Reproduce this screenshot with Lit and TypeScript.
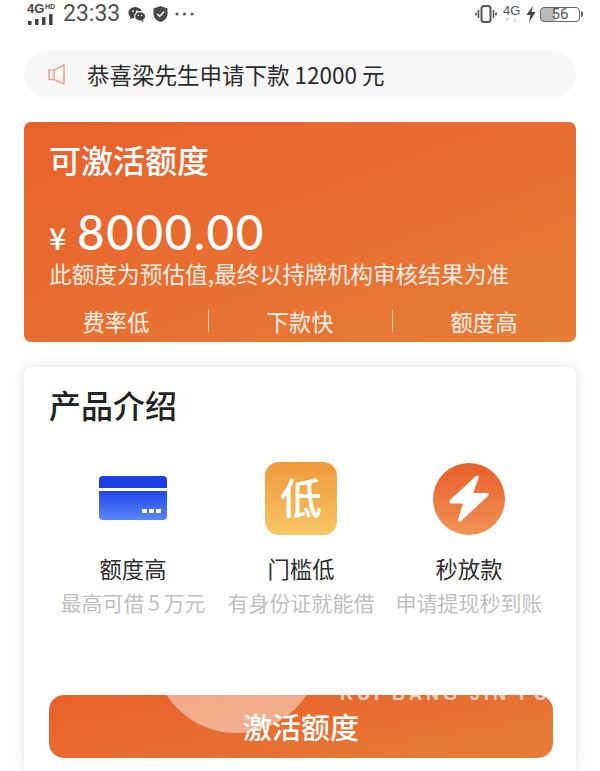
import { LitElement, html, css } from "lit";
import { customElement } from "lit/decorators.js";

@customElement("app-root")
export class AppRoot extends LitElement {
  static styles = css`
    :host { display: block; width: 600px; height: 771px; overflow: hidden; background: #fff; font-family: "Noto Sans CJK SC", "Noto Sans", sans-serif; color: #222; }
    .page { height: 771px; display: flex; flex-direction: column; overflow: hidden; }
    .status { box-sizing: border-box; height: 27px; padding: 1px 20px 0 27px; display: flex; align-items: center; color: #4a4a4a; flex: none; }
    .sig { display: block; }
    .time { font: 23px/28px "Roboto", sans-serif; margin-left: 8px; color: #505050; }
    .ic { display: block; }
    .wechat { margin-left: 8px; }
    .shield { margin-left: 7px; }
    .dots { margin-left: 7px; }
    .spacer { flex: 1; }
    .g4 { margin: 0 6px 0 6px; }
    .bat { margin-left: 4px; width: 40px; height: 15px; border: 1.5px solid #666; border-radius: 4px; box-sizing: border-box; position: relative; background: linear-gradient(90deg, #bbb 0 36%, #fff 36%); display: flex; align-items: center; justify-content: center; font: 15px/14px "Roboto", sans-serif; color: #555; }
    .bat::after { content: ""; position: absolute; right: -4px; top: 3px; width: 2px; height: 6px; background: #666; border-radius: 0 2px 2px 0; }
    .notice { margin: 24px 24px 0; height: 46px; border-radius: 23px; background: #f7f7f7; display: flex; align-items: center; padding-left: 24px; gap: 22px; font-size: 22.5px; color: #2a2a2a; flex: none; }
    .card { margin: 25px 24px 0; height: 220px; box-sizing: border-box; border-radius: 7px; padding: 15px 0 0 25px; color: #fff; background: linear-gradient(160deg, #e9602b, #e67d38); display: flex; flex-direction: column; flex: none; }
    .card h1 { margin: 0; font-size: 32px; line-height: 44px; font-weight: 500; }
    .amount { display: flex; align-items: baseline; margin-top: 22px; height: 46px; line-height: 46px; }
    .yen { font: 500 30px "Noto Sans CJK SC", sans-serif; margin-right: 11px; }
    .num { font: 500 47.5px "Lato", sans-serif; letter-spacing: 1.6px; }
    .note { font-size: 22.7px; line-height: 30px; margin-top: 10px; white-space: nowrap; color: #fdeee5; }
    .tags { margin: 20px 0 0 -25px; display: grid; grid-template-columns: 184px 184px 184px; align-items: center; }
    .tag { text-align: center; font-size: 22.3px; line-height: 24px; position: relative; color: #fff2ea; }
    .tag + .tag::before { content: ""; position: absolute; left: 0; top: 1px; width: 1px; height: 22px; background: #f6cdb4; }
    .panel { margin: 25px 24px 0; flex: 1; border-radius: 8px 8px 0 0; background: #fff; box-shadow: 0 0 12px rgba(0,0,0,0.13); padding: 15px 23px 0 25px; display: flex; flex-direction: column; }
    .panel h2 { margin: 0; font-size: 32px; line-height: 44px; font-weight: 500; color: #222; }
    .feats { margin-top: 36px; display: grid; grid-template-columns: repeat(3, 1fr); text-align: center; }
    .feat { display: flex; flex-direction: column; align-items: center; }
    .feat .box { height: 73px; display: flex; align-items: center; justify-content: center; }
    .low { width: 72px; height: 73px; border-radius: 14px; background: linear-gradient(180deg, #f0983a, #f6c664); color: #fff; font-size: 42px; line-height: 68px; text-align: center; font-weight: 500; }
    .name { font-size: 22.3px; line-height: 30px; margin-top: 18px; color: #2c2c2c; white-space: nowrap; }
    .desc { font-size: 21px; line-height: 28px; margin-top: 5px; color: #bfbfbf; white-space: nowrap; word-spacing: -1px; }
    .cta { box-sizing: border-box; margin-top: 79px; height: 63px; padding-bottom: 2px; border-radius: 15px; position: relative; overflow: hidden; background: linear-gradient(170deg, #e85f2a, #e67d38); display: flex; align-items: center; justify-content: center; color: #fff; font-size: 29px; font-weight: 500; }
    .cta span { position: relative; }
    .bubble { position: absolute; left: 104px; top: -129px; width: 167px; height: 167px; border-radius: 50%; background: rgba(255,255,255,0.45); }
    .mark { position: absolute; left: 291px; top: -11px; font: 700 18px/20px "Liberation Sans", sans-serif; letter-spacing: 4px; color: rgba(255,255,255,0.7); white-space: nowrap; }
  `;

  render() {
    return html`<div class="page">
      <div class="status">
        <svg class="sig" width="28" height="24" viewBox="0 0 28 24">
          <text x="0" y="11" font-family="Liberation Sans" font-size="13" font-weight="700" fill="#444">4G</text>
          <text x="18" y="7" font-family="Liberation Sans" font-size="7" font-weight="700" fill="#444">HD</text>
          <rect x="1" y="19" width="3.500" height="4" fill="#444"/><rect x="8" y="17" width="3.500" height="6" fill="#444"/><rect x="15" y="15" width="3.500" height="8" fill="#444"/><rect x="22" y="12" width="3.500" height="11" fill="#444"/>
        </svg>
        <span class="time">23:33</span>
        <svg class="ic wechat" width="18" height="17" viewBox="0 0 20 18">
          <ellipse cx="8" cy="7" rx="7.600" ry="6.400" fill="#444"/><path d="M3 11 L2.400 14.600 L6.500 12 Z" fill="#444"/>
          <ellipse cx="13.500" cy="11" rx="6.200" ry="5.200" fill="#444" stroke="#fff" stroke-width="1.200"/><path d="M16.500 15 L17.400 17.400 L14 16 Z" fill="#444"/>
          <circle cx="5.600" cy="5.400" r="1" fill="#fff"/><circle cx="10" cy="5.400" r="1" fill="#fff"/><circle cx="11.600" cy="10" r=".8" fill="#fff"/><circle cx="15.200" cy="10" r=".8" fill="#fff"/>
        </svg>
        <svg class="ic shield" width="15" height="18" viewBox="0 0 16 18">
          <path d="M8 .5 L15.500 3 V9 C15.500 13.500 11.500 16.500 8 17.500 C4.500 16.500 .5 13.500 .5 9 V3 Z" fill="#484848"/>
          <path d="M4.500 8.800 L7.200 11.400 L11.800 6.400" fill="none" stroke="#e4e4e4" stroke-width="1.800"/>
        </svg>
        <svg class="ic dots" width="19" height="4" viewBox="0 0 19 4"><circle cx="2" cy="2" r="1.500" fill="#555"/><circle cx="9.500" cy="2" r="1.500" fill="#555"/><circle cx="17" cy="2" r="1.500" fill="#555"/></svg>
        <div class="spacer"></div>
        <svg class="ic" width="22" height="20" viewBox="0 0 22 20" fill="none" stroke="#555" stroke-width="1.600">
          <rect x="6.500" y="2" width="9" height="16" rx="2.500" stroke-width="2"/><path d="M3.500 6V14M1 8.500V11.500M18.500 6V14M21 8.500V11.500"/>
        </svg>
        <svg class="ic g4" width="17" height="22" viewBox="0 0 17 22">
          <text x="0" y="12" font-family="Liberation Sans" font-size="13" font-weight="400" fill="#555">4G</text>
          <path d="M2 15H7L4.500 19ZM9.500 19H14.500L12 15Z" fill="#ddd"/>
        </svg>
        <svg class="ic" width="10" height="18" viewBox="0 0 10 18"><path d="M7 0.500 L0.500 10 H4.500 L3 17.500 L9.500 7 H5.500 Z" fill="#444"/></svg>
        <div class="bat">56</div>
      </div>

      <div class="notice">
        <svg width="17" height="21" viewBox="0 0 17 21" fill="none" stroke="#eba88c" stroke-width="1.600" stroke-linejoin="round">
          <path d="M1 6 H6 L16 1 V20 L6 15.500 H1 Z"/><path d="M6 6V15.500"/>
        </svg>
        <span>恭喜梁先生申请下款 12000 元</span>
      </div>

      <section class="card">
        <h1>可激活额度</h1>
        <div class="amount"><span class="yen">¥</span><span class="num">8000.00</span></div>
        <div class="note">此额度为预估值,最终以持牌机构审核结果为准</div>
        <div class="tags">
          <div class="tag">费率低</div><div class="tag">下款快</div><div class="tag">额度高</div>
        </div>
      </section>

      <section class="panel">
        <h2>产品介绍</h2>
        <div class="feats">
          <div class="feat">
            <div class="box">
              <svg width="68" height="45" viewBox="0 0 68 45">
                <defs><linearGradient id="cg" x1="0" y1="0" x2="0" y2="1"><stop offset="0" stop-color="#2446e8"/><stop offset="1" stop-color="#5a86f8"/></linearGradient></defs>
                <path d="M0 12V4a4 4 0 0 1 4-4H64a4 4 0 0 1 4 4V12Z" fill="#1e3ee6"/>
                <path d="M0 15H68V40a4 4 0 0 1-4 4H4a4 4 0 0 1-4-4Z" fill="url(#cg)"/>
                <rect x="43" y="33" width="5" height="4" fill="#fff"/><rect x="50" y="33" width="5" height="4" fill="#fff"/><rect x="57" y="33" width="5" height="4" fill="#fff"/>
              </svg>
            </div>
            <div class="name">额度高</div>
            <div class="desc">最高可借 5 万元</div>
          </div>
          <div class="feat">
            <div class="box"><div class="low">低</div></div>
            <div class="name">门槛低</div>
            <div class="desc">有身份证就能借</div>
          </div>
          <div class="feat">
            <div class="box">
              <svg width="72" height="72" viewBox="0 0 72 72">
                <defs><linearGradient id="bg" x1="0" y1="0" x2="0" y2="1"><stop offset="0" stop-color="#e85e2b"/><stop offset="1" stop-color="#f09355"/></linearGradient></defs>
                <circle cx="36" cy="36" r="36" fill="url(#bg)"/>
                <path d="M43 13 L17 37 Q15 40 18 40.500 H30 L25 57 Q26 60 28 58 L55 33 Q57 30 54 30 H40 L46 14 Q45 12 43 13 Z" fill="#fff"/>
              </svg>
            </div>
            <div class="name">秒放款</div>
            <div class="desc">申请提现秒到账</div>
          </div>
        </div>
        <div class="cta">
          <div class="bubble"></div>
          <div class="mark">RUI BANG JIN FU</div>
          <span>激活额度</span>
        </div>
      </section>
    </div>`;
  }
}
